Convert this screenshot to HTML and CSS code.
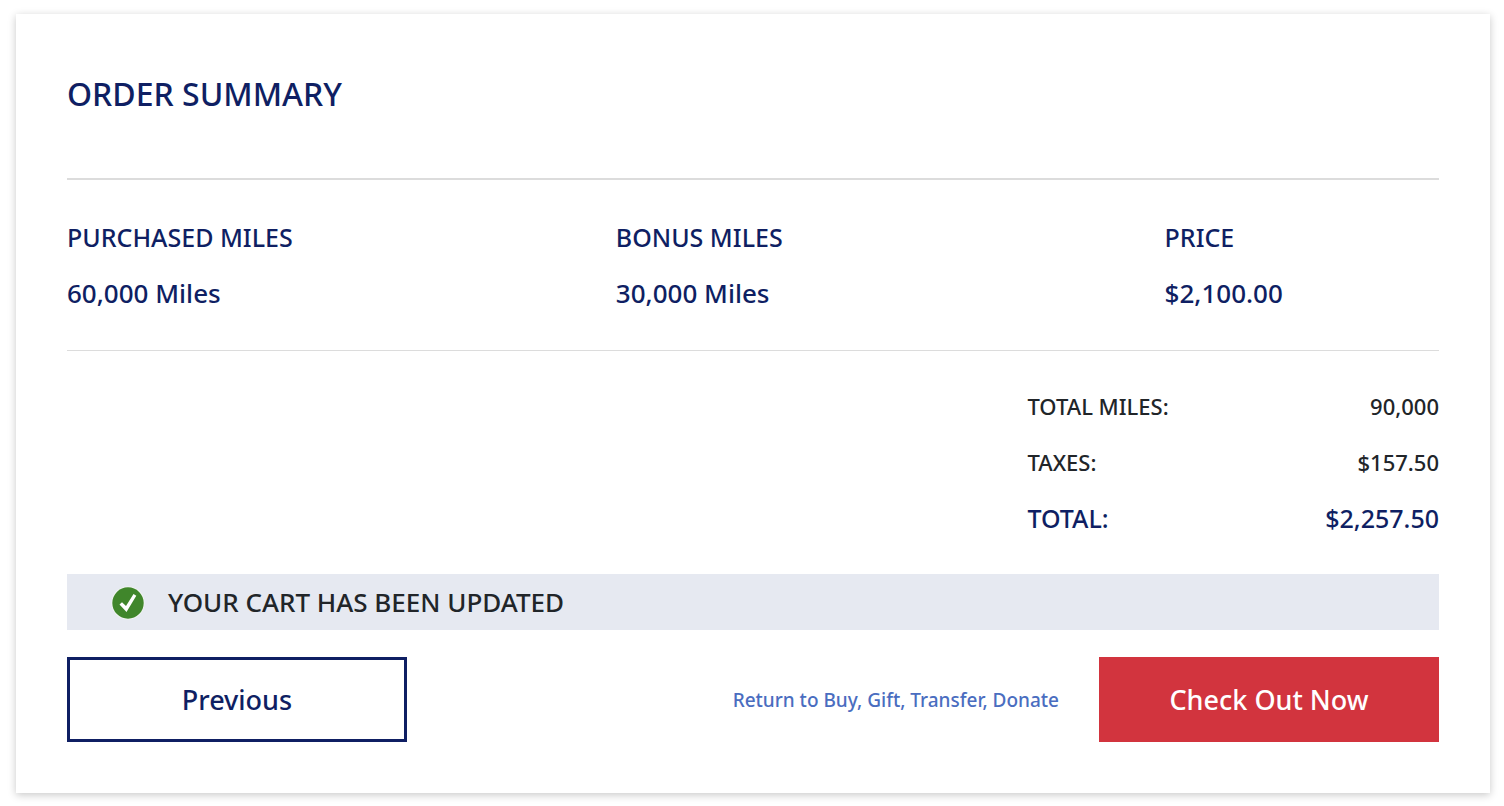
FILE: index.html
```html
<!DOCTYPE html>
<html lang="en">
<head>
<meta charset="utf-8">
<meta name="viewport" content="width=device-width, initial-scale=1">
<title>Order Summary</title>
<link rel="stylesheet" href="styles.css">
</head>
<body>
<main class="card">
  <h1 class="title">ORDER SUMMARY</h1>
  <dl class="items">
    <div class="item"><dt>PURCHASED MILES</dt><dd>60,000 Miles</dd></div>
    <div class="item"><dt>BONUS MILES</dt><dd>30,000 Miles</dd></div>
    <div class="item"><dt>PRICE</dt><dd>$2,100.00</dd></div>
  </dl>
  <dl class="totals">
    <div class="row"><dt>TOTAL MILES:</dt><dd>90,000</dd></div>
    <div class="row"><dt>TAXES:</dt><dd>$157.50</dd></div>
    <div class="row grand"><dt>TOTAL:</dt><dd>$2,257.50</dd></div>
  </dl>
  <div class="notice" role="status">
    <svg class="check" viewBox="0 0 34 34" aria-hidden="true">
      <circle cx="17" cy="18" r="16.5" fill="#f4f7f3"/>
      <circle cx="17" cy="18" r="15.700" fill="#40862b"/>
      <path d="M8.500 19.500L11 17.200L15 21L22.500 9L25.300 10.800L15.500 27Z" fill="#fff"/>
    </svg>
    <span>YOUR CART HAS BEEN UPDATED</span>
  </div>
  <div class="actions">
    <button class="button previous" type="button">Previous</button>
    <a class="return" href="#">Return to Buy, Gift, Transfer, Donate</a>
    <button class="button checkout" type="button">Check Out Now</button>
  </div>
</main>
</body>
</html>
```
FILE: styles.css
```css
* { box-sizing: border-box; }
body {
  margin: 0;
  padding: 14px 14px 13px 16px;
  background: #fff;
  color: #212529;
  font-family: "Noto Sans", "Open Sans", sans-serif;
  font-weight: 500;
}
.card {
  padding: 52px 51px 51px;
  background: #fff;
  box-shadow: 0 2px 8px rgba(0, 0, 0, 0.22);
}
dl, dd, h1 { margin: 0; }
.title {
  padding-bottom: 56px;
  border-bottom: 2px solid #dcdcdc;
  color: #0f1f63;
  font-size: 32px;
  font-weight: 500;
  line-height: 56px;
}
.items {
  display: grid;
  grid-template-columns: 2fr 2fr 1fr;
  padding: 29px 0;
  border-bottom: 1px solid #dcdcdc;
  color: #0f1f63;
  font-size: 25px;
  line-height: 56px;
}
.item dd { font-size: 26px; }
.totals {
  width: 30%;
  margin-left: auto;
  padding: 27px 0 28px;
  font-size: 22px;
  line-height: 56px;
}
.row { display: flex; justify-content: space-between; }
.grand { color: #0f1f63; font-size: 25px; }
.notice {
  display: flex;
  align-items: center;
  gap: 23px;
  padding-left: 44px;
  background: #e6e9f1;
  font-size: 26px;
  line-height: 56px;
}
.check { width: 34px; height: 34px; overflow: visible; }
.actions { display: flex; align-items: center; margin-top: 27px; }
.button {
  width: 340px;
  height: 85px;
  padding: 0;
  border: 0;
  font-family: inherit;
  font-size: 27px;
  font-weight: 500;
}
.previous { border: 3px solid #0f1f63; background: #fff; color: #0f1f63; }
.return {
  margin-left: auto;
  margin-right: 40px;
  color: #4a6dc0;
  font-size: 19px;
  text-decoration: none;
}
.checkout { background: #d2343e; color: #fff; }
```
